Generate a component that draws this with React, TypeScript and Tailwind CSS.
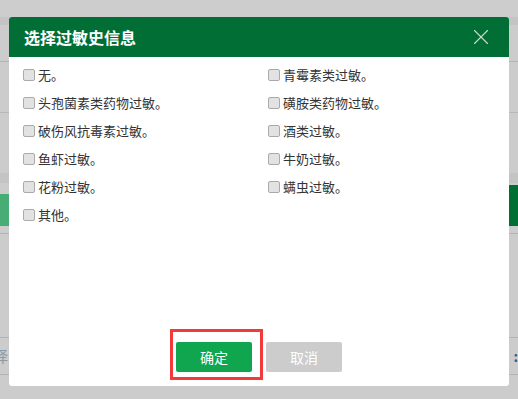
import { X } from "lucide-react";

const left = ["无。", "头孢菌素类药物过敏。", "破伤风抗毒素过敏。", "鱼虾过敏。", "花粉过敏。", "其他。"];
const right = ["青霉素类过敏。", "磺胺类药物过敏。", "酒类过敏。", "牛奶过敏。", "螨虫过敏。"];

const font = { fontFamily: '"Noto Sans CJK SC", "Microsoft YaHei", sans-serif' };

function Option({ label }: { label: string }) {
  return (
    <label className="flex h-[28px] items-center gap-[3px] text-[13px] text-[#333]">
      <span className="h-[12px] w-[12px] rounded-[2px] border border-[#aaaaaa] bg-[#e2e2e2]" />
      <span>{label}</span>
    </label>
  );
}

export default function App() {
  const rows = Math.max(left.length, right.length);
  return (
    <div className="relative h-[399px] w-[518px] overflow-hidden bg-[#cccccc]" style={font}>
      {/* page behind the overlay */}
      <div className="flex flex-col">
        <div className="h-[17px] bg-[#cdcdcd]" />
        <div className="h-[8px] bg-[#c4c4c4]" />
        <div className="h-[37px] border-b border-[#b4b4b4]" />
        <div className="h-[51px] border-b border-[#b8b8b8]" />
        <div className="h-[60px]" />
        <div className="h-[10px] bg-[#c4c4c4]" />
        <div className="flex h-[43px] items-end justify-between">
          <div className="h-[32px] w-[40px] bg-[#48ad74]" />
          <div className="h-[41px] w-[40px] rounded-l-[3px] bg-[#006f33]" />
        </div>
        <div className="h-[8px] border-b border-[#b4b4b4]" />
        <div className="h-[104px] border-b border-[#b4b4b4]" />
        <div className="flex h-[37px] items-center justify-between border-b border-[#b4b4b4]">
          <span className="-ml-[7px] text-[15px] text-[#8a9aa8]">择</span>
          <span className="text-[14px] font-bold text-[#2a5c9a]">:</span>
        </div>
        <div className="h-[10px]" />
        <div className="flex-1 bg-[#c2c2c2]" />
      </div>

      {/* dialog */}
      <div className="absolute left-[9px] top-[17px] flex h-[369px] w-[500px] flex-col rounded-[3px] bg-white">
        <div className="flex h-[40px] items-center justify-between rounded-t-[3px] bg-[#006e35] pl-[15px] pr-[15px]">
          <h2 className="text-[16px] font-bold text-white">选择过敏史信息</h2>
          <X className="h-[26px] w-[26px] text-[#c8dccf]" strokeWidth={1} />
        </div>

        <div className="grid grid-cols-[245px_1fr] pl-[14px] pt-[4px]">
          {Array.from({ length: rows }).flatMap((_, i) => [
            <div key={`l${i}`}>{left[i] && <Option label={left[i]} />}</div>,
            <div key={`r${i}`}>{right[i] && <Option label={right[i]} />}</div>,
          ])}
        </div>

        <div className="mt-auto flex justify-center gap-[14px] pb-[14px]">
          <div className="relative">
            <button className="h-[30px] w-[76px] rounded-[2px] bg-[#0fa64f] text-[14px] text-white">确定</button>
            <div className="absolute -left-[6px] -top-[13px] h-[51px] w-[93px] border-[3px] border-[#f23a3a]" />
          </div>
          <button className="h-[30px] w-[76px] rounded-[2px] bg-[#cccccc] text-[14px] text-white">取消</button>
        </div>
      </div>
    </div>
  );
}
